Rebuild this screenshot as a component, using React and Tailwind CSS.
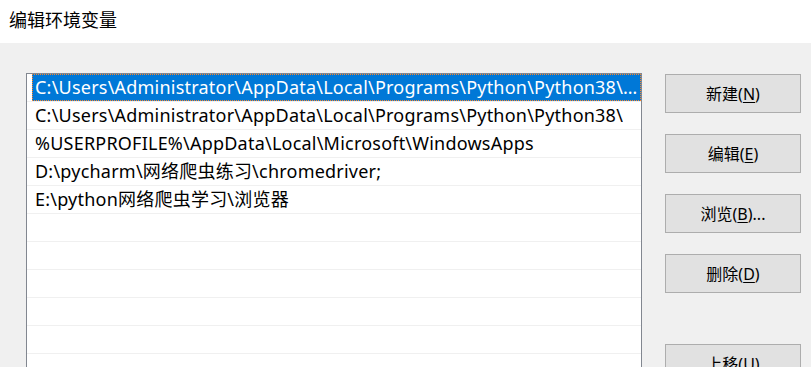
const rows = [
  "C:\\Users\\Administrator\\AppData\\Local\\Programs\\Python\\Python38\\Scripts\\",
  "C:\\Users\\Administrator\\AppData\\Local\\Programs\\Python\\Python38\\",
  "%USERPROFILE%\\AppData\\Local\\Microsoft\\WindowsApps",
  "D:\\pycharm\\网络爬虫练习\\chromedriver;",
  "E:\\python网络爬虫学习\\浏览器",
  "",
  "",
  "",
  "",
  "",
  "",
];

const buttons = [
  { label: "新建", key: "N" },
  { label: "编辑", key: "E" },
  { label: "浏览", key: "B", tail: "..." },
  { label: "删除", key: "D" },
];

const font = { fontFamily: '"Noto Sans", "Noto Sans CJK SC", sans-serif' };

const Button = ({ label, keyChar, tail, className = "" }) => (
  <button
    className={`w-[136px] h-[39px] bg-[#e1e1e1] border border-[#adadad] text-[16px] text-black leading-none ${className}`}
  >
    {label}(<span className="underline underline-offset-2">{keyChar}</span>){tail}
  </button>
);

export default function App() {
  return (
    <div className="w-[811px] h-[367px] overflow-hidden bg-[#f0f0f0]" style={font}>
      {/* title bar */}
      <div className="h-[43px] bg-white flex items-center pl-[9px] pb-[2px] text-[18px] text-black">
        编辑环境变量
      </div>

      <div className="flex pt-[30px] pl-[26px]">
        {/* path list */}
        <div className="w-[616px] h-[400px] bg-white border border-[#828790] flex flex-col">
          {rows.map((r, i) => (
            <div
              key={i}
              className={`h-[28px] shrink-0 border-b border-[#f0f0f0] flex ${i === 0 ? "pl-[5px]" : ""}`}
            >
              <div
                className={`flex-1 min-w-0 flex items-center text-[18px] tracking-[0.22px] whitespace-nowrap overflow-hidden ${
                  i === 0
                    ? "bg-[#0078d7] text-white outline outline-1 outline-dotted outline-[#ff8728] -outline-offset-1 pl-[3px] pr-[3px]"
                    : "text-black pl-[8px]"
                }`}
              >
                <span className="overflow-hidden text-ellipsis">{r}</span>
              </div>
            </div>
          ))}
        </div>

        {/* buttons */}
        <div className="flex flex-col ml-[23px] pt-[1px]">
          {buttons.map((b) => (
            <Button
              key={b.key}
              label={b.label}
              keyChar={b.key}
              tail={b.tail}
              className="mb-[21px]"
            />
          ))}
          <Button label="上移" keyChar="U" className="mt-[30px]" />
        </div>
      </div>
    </div>
  );
}
